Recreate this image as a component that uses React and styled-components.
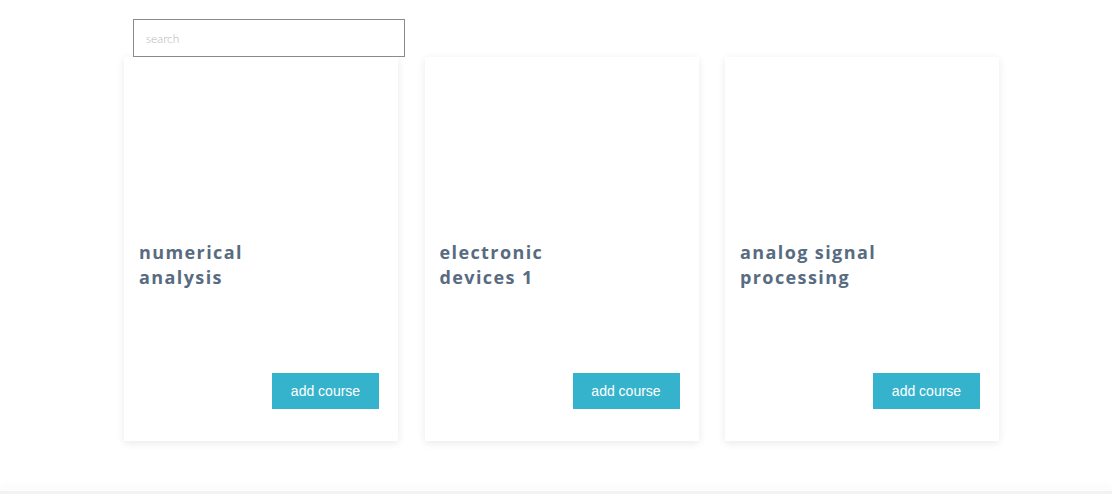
import React from "react";
import styled, { createGlobalStyle } from "styled-components";

const Global = createGlobalStyle`
  html, body { margin: 0; padding: 0; background: #fff; }
  body { font-family: "Open Sans", "Liberation Sans", sans-serif; }
`;

const Page = styled.div`
  min-height: 494px;
  display: flex;
  flex-direction: column;
`;

const Main = styled.main`
  padding: 19px 0 0 124px;
  flex: 1;
`;

const SearchInput = styled.input`
  display: block;
  box-sizing: border-box;
  margin-left: 9px;
  width: 272px;
  height: 38px;
  border: 1px solid #8a8a8a;
  padding: 0 12px;
  font-family: Lato, "Liberation Sans", sans-serif;
  font-weight: 300;
  font-size: 12px;
  color: #333;
  outline: none;
  position: relative;
  z-index: 1;
  background: #fff;
  &::placeholder { color: #b5b5b5; }
`;

const Grid = styled.div`
  display: grid;
  grid-template-columns: repeat(3, 274px);
  column-gap: 26.5px;
`;

const Card = styled.div`
  height: 384px;
  background: #fff;
  box-shadow: 0 2px 8px rgba(0, 0, 0, 0.09);
  box-sizing: border-box;
  padding: 183px 19px 32px 15px;
  display: flex;
  flex-direction: column;
`;

const Title = styled.h2`
  margin: 0;
  width: 150px;
  font-family: "Open Sans", sans-serif;
  font-weight: 700;
  font-size: 18px;
  line-height: 25px;
  letter-spacing: 1.4px;
  color: #576b81;
`;

const AddButton = styled.button`
  margin-top: auto;
  align-self: flex-end;
  width: 107px;
  height: 36px;
  border: none;
  background: #36b3cc;
  color: #fff;
  font-family: "Liberation Sans", Arial, sans-serif;
  font-size: 14px;
  cursor: pointer;
`;

const Footer = styled.footer`
  height: 3px;
  background: #f2f2f2;
  box-shadow: 0 -3px 10px rgba(0, 0, 0, 0.06);
`;

const courses = ["numerical analysis", "electronic devices 1", "analog signal processing"];

export default function App() {
  return (
    <Page>
      <Global />
      <Main>
        <SearchInput placeholder="search" />
        <Grid>
          {courses.map((c) => (
            <Card key={c}>
              <Title>{c}</Title>
              <AddButton>add course</AddButton>
            </Card>
          ))}
        </Grid>
      </Main>
      <Footer />
    </Page>
  );
}
